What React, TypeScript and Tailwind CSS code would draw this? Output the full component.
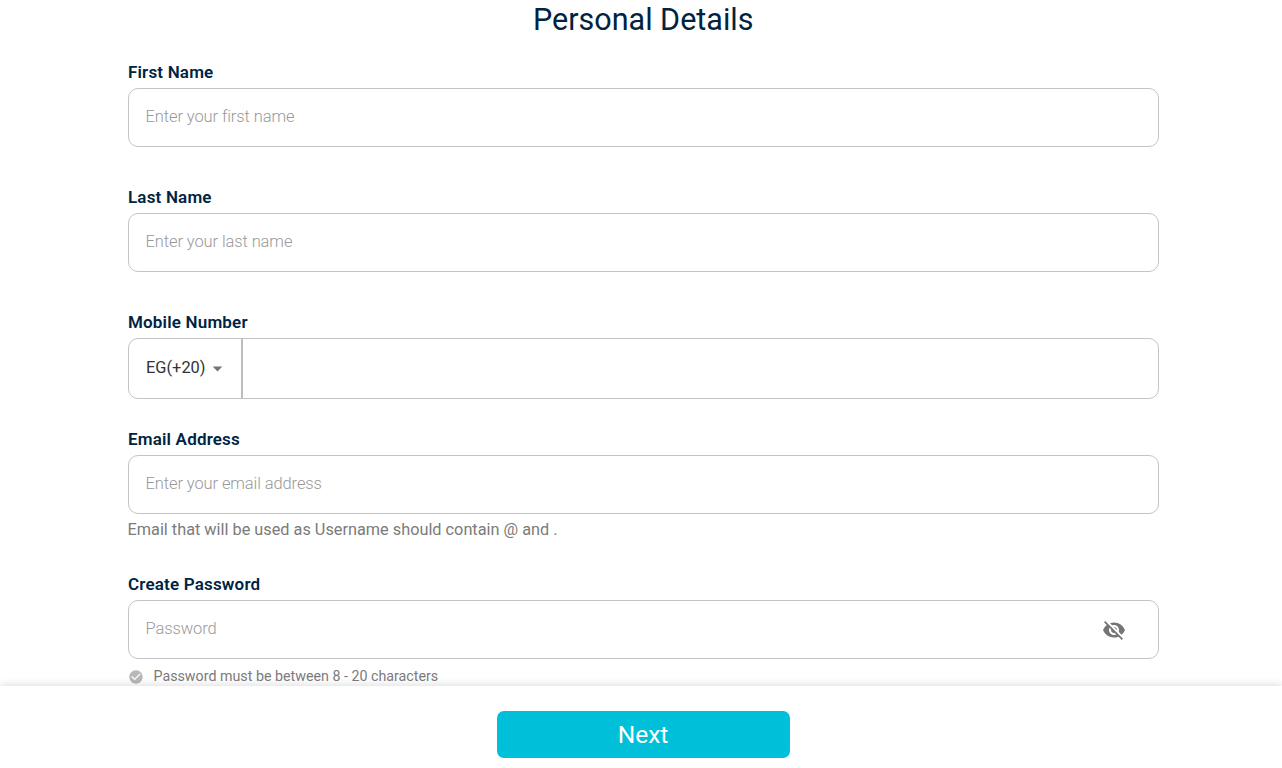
import { useState } from 'react';
import { MdArrowDropDown, MdCheckCircle, MdVisibility, MdVisibilityOff } from 'react-icons/md';
import clsx from 'clsx';

const inputClass =
  'w-full h-[59px] rounded-[10px] border border-[#c4c4c4] bg-white pr-4 pl-[17px] pb-[3px] text-[16.5px] tracking-[-0.1px] font-light text-[#222] outline-none placeholder:text-[#999]';

interface FieldProps {
  id: string;
  label: string;
  className?: string;
  children: React.ReactNode;
}

function Field({ id, label, className, children }: FieldProps) {
  return (
    <div className={clsx('flex flex-col', className)}>
      <label htmlFor={id} className="h-6 w-fit whitespace-nowrap pl-[0.5px] text-[17px] leading-4 font-semibold tracking-[0.18px] text-[#00233f]">
        {label}
      </label>
      {children}
    </div>
  );
}

export default function App() {
  const [showPassword, setShowPassword] = useState(false);

  return (
    <div className="flex h-[768px] flex-col overflow-hidden bg-white font-['Roboto',sans-serif]">
      {/* Form */}
      <main className="h-[686px] shrink-0 overflow-hidden pr-[123px] pl-[127.5px]">
        <h1 className="h-16 pt-1 text-center text-[30.5px] leading-8 font-normal text-[#00233f]">
          Personal Details
        </h1>

        <Field id="firstName" label="First Name" className="h-[125px]">
          <input id="firstName" className={inputClass} placeholder="Enter your first name" />
        </Field>

        <Field id="lastName" label="Last Name" className="h-[125px]">
          <input id="lastName" className={inputClass} placeholder="Enter your last name" />
        </Field>

        <Field id="mobile" label="Mobile Number" className="h-[117px]">
          <div className="flex h-[61px] overflow-hidden rounded-[10px] border border-[#c4c4c4]">
            <button type="button" className="flex w-[114px] items-center border-r-2 border-[#bdbdbd] pb-px pl-[17.5px] text-[16.4px] text-[#333]">
              EG(+20)
              <MdArrowDropDown className="h-[23px] w-[23px] shrink-0 text-[#757575]" />
            </button>
            <input id="mobile" className="min-w-0 flex-1 px-4 text-[16.5px] outline-none" />
          </div>
        </Field>

        <Field id="email" label="Email Address" className="h-[145px]">
          <input id="email" className={inputClass} placeholder="Enter your email address" />
          <p className="pt-1.5 text-[16.3px] leading-[19px] text-[#7b7b7b]">
            Email that will be used as Username should contain @ and .
          </p>
        </Field>

        <Field id="password" label="Create Password">
          <div className="relative">
            <input
              id="password"
              type={showPassword ? 'text' : 'password'}
              className={inputClass}
              placeholder="Password"
            />
            <button
              type="button"
              aria-label="Toggle password"
              onClick={() => setShowPassword(!showPassword)}
              className="absolute top-[18px] right-[33px] text-[#757575]"
            >
              {showPassword ? <MdVisibility className="h-6 w-6" /> : <MdVisibilityOff className="h-6 w-6" />}
            </button>
          </div>
          <div className="flex items-center gap-2.5 pt-2 text-[14.25px] leading-[18px] text-[#7b7b7b]">
            <MdCheckCircle className="h-4 w-4 shrink-0 text-[#b8b8b8]" />
            <span className="pb-0.5">Password must be between 8 - 20 characters</span>
          </div>
        </Field>
      </main>

      {/* Bottom bar */}
      <footer className="relative flex flex-1 justify-center bg-white pt-[25px] pl-1 shadow-[0_-1px_8px_rgba(0,0,0,0.14)]">
        <button type="button" className="h-[47px] w-[293px] rounded-[7px] bg-[#00bfd9] text-[24.5px] leading-[48px] text-white">
          Next
        </button>
      </footer>
    </div>
  );
}
